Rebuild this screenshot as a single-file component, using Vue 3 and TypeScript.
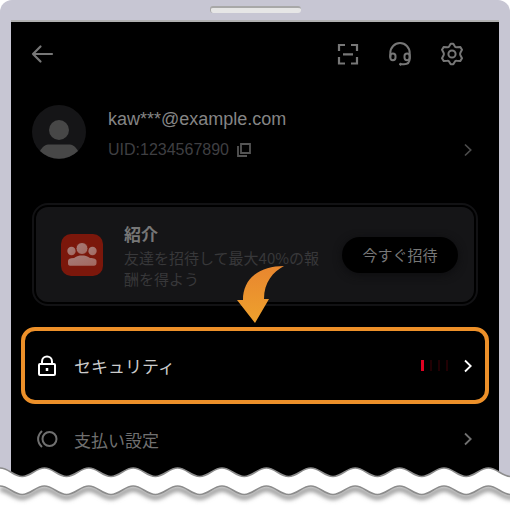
<script setup lang="ts">
interface MenuItem {
  id: string
  label: string
  highlighted: boolean
  level?: number
}

const menu: MenuItem[] = [
  { id: 'security', label: 'セキュリティ', highlighted: true, level: 1 },
  { id: 'payment', label: '支払い設定', highlighted: false },
]

const levels = [1, 2, 3, 4]

// Torn-paper edge: a repeated curve, long enough for wide windows.
const HALF = 22.2
const COUNT = 120

function wave(crest: number, trough: number): string {
  let d = `M0 ${crest}`
  for (let i = 0; i < COUNT; i++) {
    const x = i * HALF
    const from = i % 2 === 0 ? crest : trough
    const to = i % 2 === 0 ? trough : crest
    d += ` C${x + 8.5} ${from} ${x + HALF - 8.5} ${to} ${x + HALF} ${to}`
  }
  return d
}

const upperEdge = wave(3, 11.5)
const lowerEdge = wave(21, 29.5)
const end = COUNT * HALF
const upperFill = `${upperEdge} V60 H0 Z`
const lowerFill = `${lowerEdge} V-10 H0 Z`
</script>

<template>
  <main class="page">
    <div class="device">
      <div class="bezel"><span class="speaker"></span></div>
      <div class="screen">
        <header class="topbar">
          <button class="icon-button" type="button" aria-label="戻る">
            <svg width="24" height="24" viewBox="0 0 24 24" fill="none" stroke="currentColor" stroke-width="2.200" stroke-linecap="round" stroke-linejoin="round">
              <path d="M22 12H3M10.500 4.500L3 12L10.500 19.500" />
            </svg>
          </button>
          <div class="actions">
            <button class="icon-button" type="button" aria-label="スキャン">
              <svg width="24" height="24" viewBox="0 0 24 24" fill="none" stroke="currentColor" stroke-width="2.200">
                <path d="M9 3H3V9M15 3H21V9M3 15V21.500H9M21 15V21.500H15M7 12.300H17" />
              </svg>
            </button>
            <button class="icon-button" type="button" aria-label="サポート">
              <svg width="24" height="26" viewBox="0 0 24 26" fill="none" stroke="currentColor" stroke-width="2" stroke-linecap="round">
                <path d="M2.300 16V12A9.700 10 0 0 1 21.700 12V17.500C21.700 21.500 19.500 23.300 16 23.300H12.500" />
                <path d="M2.300 15C2.300 11.500 7.500 11.500 7.500 15V16.500C7.500 20 2.300 20 2.300 16.500ZM21.700 15C21.700 11.500 16.500 11.500 16.500 15V16.500C16.500 20 21.700 20 21.700 16.500Z" />
                <circle cx="12.500" cy="23.300" r="1" fill="currentColor" stroke-width="1" />
              </svg>
            </button>
            <button class="icon-button" type="button" aria-label="設定">
              <svg width="24" height="24" viewBox="0 0 24 24" fill="none" stroke="currentColor" stroke-width="2" stroke-linejoin="round">
                <path d="M10.700 1.800H13.300L14.800 4.300C15.300 5 16 5.300 16.700 5.200L20.200 4.900L22 7.800L20.400 10.800C20 11.600 20 12.400 20.400 13.200L22 16.200L20.200 19.100L16.700 18.800C16 18.700 15.300 19 14.800 19.700L13.300 22.200H10.700L9.200 19.700C8.700 19 8 18.700 7.300 18.800L3.800 19.100L2 16.200L3.600 13.200C4 12.400 4 11.600 3.600 10.800L2 7.800L3.800 4.900L7.300 5.200C8 5.300 8.700 5 9.200 4.300Z" />
                <circle cx="12" cy="12" r="3.600" />
              </svg>
            </button>
          </div>
        </header>

        <section class="profile">
          <svg class="avatar" width="54" height="54" viewBox="0 0 54 54">
            <circle cx="27" cy="27" r="27" fill="#151517" />
            <circle cx="27" cy="25" r="10" fill="#474747" />
            <path d="M8 46C11 41 13 39.500 18 39.500H36C41 39.500 43 41 46 46A27 27 0 0 1 8 46Z" fill="#474747" />
          </svg>
          <div class="identity">
            <div class="email">kaw***@example.com</div>
            <div class="uid">
              <span>UID:1234567890</span>
              <button class="icon-button" type="button" aria-label="コピー">
                <svg width="14" height="14" viewBox="0 0 14 14" fill="none" stroke="currentColor" stroke-width="1.800">
                  <path d="M4 1H13V10H4ZM1 3V13H10" />
                </svg>
              </button>
            </div>
          </div>
          <svg class="chevron dim" width="8" height="14" viewBox="0 0 8 14" fill="none" stroke="currentColor" stroke-width="1.700"><path d="M1 1.500L6.700 7L1 12.500" /></svg>
        </section>

        <section class="card">
          <div class="card-body">
            <svg class="badge" width="42" height="42" viewBox="0 0 42 42">
              <defs>
                <linearGradient id="people" x1="0" y1="0" x2="1" y2="1">
                  <stop offset="0" stop-color="#a57d7a" />
                  <stop offset="1" stop-color="#a3685f" />
                </linearGradient>
              </defs>
              <rect width="42" height="42" rx="10" fill="#7b170b" />
              <g fill="url(#people)">
                <circle cx="10.500" cy="17" r="4.200" />
                <circle cx="31.500" cy="17" r="4.200" />
                <circle cx="21" cy="14.500" r="6" stroke="#7b170b" stroke-width="1" />
                <path d="M7 29V27C7 25 9 24 13 24C16 22 18 21.500 21 21.500C24 21.500 26 22 29 24C33 24 35.500 25 35.500 27V29C35.500 31 34.500 31.700 33 31.700H9C7.500 31.700 7 31 7 29Z" />
              </g>
            </svg>
            <div class="card-text">
              <h2>紹介</h2>
              <p>友達を招待して最大40%の報酬を得よう</p>
            </div>
            <button class="invite" type="button">今すぐ招待</button>
          </div>
          <svg class="pointer" width="48" height="58" viewBox="0 0 48 58" aria-hidden="true">
            <defs>
              <linearGradient id="arrow" x1="0" y1="0" x2="0" y2="1">
                <stop offset="0" stop-color="#e8862f" />
                <stop offset="1" stop-color="#eea12d" />
              </linearGradient>
            </defs>
            <path d="M47 0C36 6 27 16 27 33H32L18 57L0 34H6C6 12 23 0 47 0Z" fill="url(#arrow)" />
          </svg>
        </section>

        <nav class="menu">
          <a v-for="item in menu" :key="item.id" :href="'#' + item.id" class="row" :class="{ highlighted: item.highlighted }">
            <svg v-if="item.id === 'security'" class="row-icon" width="22" height="22" viewBox="0 0 22 22" fill="none" stroke="currentColor" stroke-width="2">
              <rect x="3" y="9" width="16" height="11" rx="1" />
              <path d="M6 9V6.500C6 -.200 16 -.200 16 6.500V9" />
              <path d="M11 13V16" stroke-width="2.500" />
            </svg>
            <svg v-else class="row-icon" width="22" height="22" viewBox="0 0 22 22" fill="none" stroke="currentColor" stroke-width="2">
              <circle cx="13.500" cy="11" r="7" />
              <path d="M6 3C.800 8 .800 14 6 19" />
            </svg>
            <span class="label">{{ item.label }}</span>
            <span v-if="item.level" class="meter">
              <i v-for="n in levels" :key="n" :class="{ on: n <= item.level }"></i>
            </span>
            <svg class="chevron" width="8" height="14" viewBox="0 0 8 14" fill="none" stroke="currentColor" stroke-width="1.800"><path d="M1 1.500L6.700 7L1 12.500" /></svg>
          </a>
        </nav>
      </div>
    </div>
    <svg class="torn" height="40" aria-hidden="true">
      <defs>
        <filter id="shade" filterUnits="userSpaceOnUse" x="0" y="10" :width="end" height="40">
          <feGaussianBlur stdDeviation="2" />
        </filter>
      </defs>
      <path :d="upperFill" fill="#fff" />
      <path :d="upperEdge" fill="none" stroke="#8c8c8c" stroke-width="1.500" />
      <path :d="lowerEdge" fill="none" stroke="#999" stroke-width="5" transform="translate(0 3)" filter="url(#shade)" />
      <clipPath id="paper"><path :d="lowerFill" /></clipPath>
      <rect y="16" width="100%" height="20" fill="#fff" clip-path="url(#paper)" />
      <path :d="lowerEdge" fill="none" stroke="#8c8c8c" stroke-width="1.500" />
    </svg>
  </main>
</template>

<style>
body {
  margin: 0;
  background: #fff;
}
</style>

<style scoped>
.page {
  font-family: "Liberation Sans", "Noto Sans CJK JP", sans-serif;
  overflow: hidden;
}

.device {
  padding: 0 11px;
  background: #c7c6d3;
  border-radius: 12px 12px 0 0;
}

.bezel {
  display: flex;
  justify-content: center;
  height: 20px;
  padding-top: 6px;
  box-sizing: border-box;
}

.speaker {
  width: 91px;
  height: 7px;
  box-sizing: border-box;
  border-top: 2px solid #a8a8a8;
  border-left: 1px solid #a8a8a8;
  border-radius: 3px;
  background: #e6e6e6;
}

.screen {
  border-top: 2px solid #b0b0b0;
  background: #000;
  color: #777;
  padding: 20px 10px 17px;
}

.icon-button {
  display: flex;
  padding: 0;
  border: 0;
  background: none;
  color: inherit;
}

.topbar {
  display: flex;
  align-items: center;
  justify-content: space-between;
  height: 24px;
  padding: 0 25px 0 9px;
}

.actions {
  display: flex;
  align-items: center;
  gap: 28px;
}

.profile {
  display: flex;
  align-items: center;
  padding: 36px 17px 0 11px;
}

.identity {
  flex: 1;
  padding: 4px 0 0 22px;
}

.email {
  font-size: 18px;
  line-height: 26px;
  color: #858585;
}

.uid {
  display: flex;
  align-items: center;
  gap: 8px;
  margin-top: 6px;
  font-size: 16px;
  line-height: 24px;
  color: #3f3f42;
}

.uid .icon-button {
  color: #555;
}

.chevron {
  flex: none;
}

.chevron.dim {
  align-self: flex-end;
  margin-bottom: 5px;
  color: #4c4c4c;
}

.card {
  position: relative;
  margin: 41px 11px 0;
  padding: 2px;
  border: 2px solid #121214;
  border-radius: 16px;
}

.card-body {
  display: flex;
  align-items: center;
  min-height: 95px;
  padding: 0 16px 0 25px;
  border-radius: 12px;
  background: #151517;
}

.badge {
  flex: none;
}

.card-text {
  flex: 1;
  padding: 4px 17px 0 21px;
}

h2 {
  margin: 0;
  font-size: 17px;
  line-height: 22px;
  font-weight: 700;
  color: #777;
}

p {
  margin: 0;
  font-family: "Noto Sans CJK JP", sans-serif;
  font-size: 15px;
  line-height: 21px;
  color: #38383a;
}

.invite {
  flex: none;
  width: 116px;
  height: 36px;
  padding: 0;
  border: 0;
  border-radius: 18px;
  background: #000;
  box-shadow: 0 2px 8px #0d0d0f;
  color: #777;
  font: 15px "Noto Sans CJK JP", sans-serif;
}

.pointer {
  position: absolute;
  top: 61px;
  left: 203px;
}

.menu {
  display: flex;
  flex-direction: column;
  margin-top: 21px;
}

.row {
  display: flex;
  align-items: center;
  height: 70px;
  padding: 0 17px 0 15px;
  color: #707070;
  font-size: 17px;
  text-decoration: none;
}

.row.highlighted {
  height: 69px;
  padding: 0 13px 0 11px;
  border: 4px solid #ed9029;
  border-radius: 14px;
  color: #fff;
}

.row-icon {
  flex: none;
}

.label {
  flex: 1;
  padding-left: 16px;
}

.highlighted .label {
  color: #ccc;
}

.meter {
  display: flex;
  gap: 6px;
  margin-right: 16px;
}

.meter i {
  width: 2px;
  height: 11px;
  background: #210003;
}

.meter .on {
  width: 3px;
  background: #e00222;
}

.torn {
  position: relative;
  display: block;
  width: 100%;
  margin-top: -26px;
}
</style>
